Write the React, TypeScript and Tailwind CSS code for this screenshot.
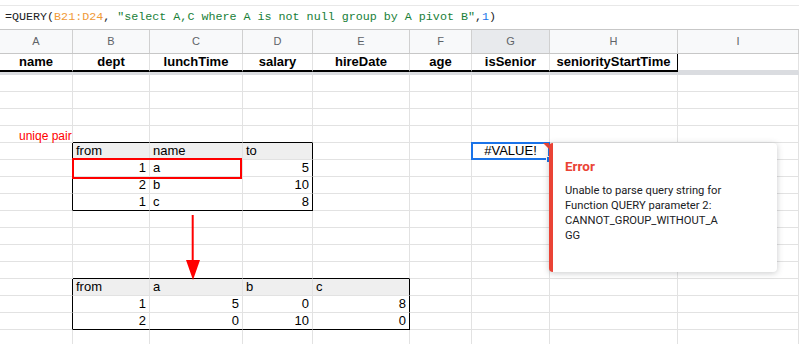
import React from "react";

const COLS = [
  "w-[73px]",
  "w-[77px]",
  "w-[93px]",
  "w-[70px]",
  "w-[97px]",
  "w-[62px]",
  "w-[78px]",
  "w-[128px]",
  "flex-1",
];
const LETTERS = ["A", "B", "C", "D", "E", "F", "G", "H", "I"];
const FIELDS = [
  "name",
  "dept",
  "lunchTime",
  "salary",
  "hireDate",
  "age",
  "isSenior",
  "seniorityStartTime",
  "",
];

type Cell = { t: string; align: "l" | "r" | "c"; head?: boolean };

// body rows start right under the frozen row
const cells: Record<string, Cell> = {
  "4-1": { t: "from", align: "l", head: true },
  "4-2": { t: "name", align: "l", head: true },
  "4-3": { t: "to", align: "l", head: true },
  "5-1": { t: "1", align: "r" },
  "5-2": { t: "a", align: "l" },
  "5-3": { t: "5", align: "r" },
  "6-1": { t: "2", align: "r" },
  "6-2": { t: "b", align: "l" },
  "6-3": { t: "10", align: "r" },
  "7-1": { t: "1", align: "r" },
  "7-2": { t: "c", align: "l" },
  "7-3": { t: "8", align: "r" },
  "12-1": { t: "from", align: "l", head: true },
  "12-2": { t: "a", align: "l", head: true },
  "12-3": { t: "b", align: "l", head: true },
  "12-4": { t: "c", align: "l", head: true },
  "13-1": { t: "1", align: "r" },
  "13-2": { t: "5", align: "r" },
  "13-3": { t: "0", align: "r" },
  "13-4": { t: "8", align: "r" },
  "14-1": { t: "2", align: "r" },
  "14-2": { t: "0", align: "r" },
  "14-3": { t: "10", align: "r" },
  "14-4": { t: "0", align: "r" },
};

const inRange = (v: number, a: number, b: number) => v >= a && v <= b;

function rightBlack(r: number, c: number) {
  if (inRange(r, 4, 7) && (c === 0 || c === 3)) return true;
  if (inRange(r, 12, 14) && (c === 0 || c === 4)) return true;
  return false;
}

function bottomBlack(r: number, c: number) {
  if ((r === 3 || r === 7) && inRange(c, 1, 3)) return true;
  if ((r === 11 || r === 14) && inRange(c, 1, 4)) return true;
  return false;
}

function BodyCell({ r, c }: { r: number; c: number }) {
  const cell = cells[`${r}-${c}`];
  const selected = r === 4 && c === 6;
  return (
    <div
      className={[
        COLS[c],
        "relative h-[17px] shrink-0 border-r border-b box-border px-[3px] text-[13px] leading-[16px] whitespace-nowrap overflow-visible",
        rightBlack(r, c) ? "border-r-black" : "border-r-[#e2e2e2]",
        bottomBlack(r, c) ? "border-b-black" : "border-b-[#e2e2e2]",
        cell?.head ? "bg-[#efefef]" : "",
        cell?.align === "r" ? "text-right" : "",
        cell?.align === "c" ? "text-center" : "",
      ].join(" ")}
    >
      {cell?.t}
      {selected && (
        <>
          <span className="block text-center">#VALUE!</span>
          <span className="absolute -left-[1px] -top-[1px] w-[79px] h-[18px] border-2 border-[#1a73e8]" />
          <span className="absolute right-[0px] top-0 w-0 h-0 border-t-[6px] border-t-[#ea4335] border-l-[6px] border-l-transparent" />
          <span className="absolute -right-[4px] -bottom-[4px] w-[7px] h-[7px] bg-[#1a73e8] border border-white" />
        </>
      )}
    </div>
  );
}

export default function App() {
  const rows = Array.from({ length: 16 }, (_, i) => i);
  return (
    <div className="relative w-[799px] h-[344px] overflow-hidden bg-white text-[#000] font-['Liberation_Sans',Arial,sans-serif]">
      {/* formula bar */}
      <div className="mt-[5px] h-[25px] border-t border-b border-t-[#e8e8e8] border-b-[#c7c7c7] box-border flex items-center pl-[5px] font-['Liberation_Mono',monospace] text-[11.7px] whitespace-pre text-[#202124]">
        <span>=QUERY(</span>
        <span className="text-[#f09a37]">B21:D24</span>
        <span>, </span>
        <span className="text-[#188038]">
          "select A,C where A is not null group by A pivot B"
        </span>
        <span>,</span>
        <span className="text-[#1a73e8]">1</span>
        <span>)</span>
      </div>

      {/* column letters */}
      <div className="flex h-[24px] border-b border-b-[#c7c7c7] box-border">
        {LETTERS.map((l, i) => (
          <div
            key={l}
            className={[
              COLS[i],
              "shrink-0 border-r border-r-[#d0d0d0] box-border flex items-center justify-center text-[11px] text-[#5f6368]",
              i === 6 ? "bg-[#e8eaed]" : "bg-[#f8f9fa]",
            ].join(" ")}
          >
            {l}
          </div>
        ))}
      </div>

      {/* frozen header row */}
      <div className="flex h-[18px]">
        {FIELDS.map((f, i) => (
          <div
            key={i}
            className={[
              COLS[i],
              "shrink-0 border-r border-b-2 box-border text-center font-bold text-[13px] leading-[16px] whitespace-nowrap",
              i === 7 ? "border-r-black" : "border-r-[#e2e2e2]",
              i === 8 ? "border-b-[#dadce0]" : "border-b-black",
            ].join(" ")}
          >
            {f}
          </div>
        ))}
      </div>
      <div className="h-[3px] bg-[#dadce0]" />

      {/* body rows */}
      {rows.map((r) => (
        <div key={r} className="flex">
          {COLS.map((_, c) => (
            <BodyCell key={c} r={r} c={c} />
          ))}
        </div>
      ))}

      {/* drawings laid over the sheet */}
      <span className="absolute left-[19px] top-[129px] text-[12px] leading-[14px] text-[#ff0000]">
        uniqe pair
      </span>
      <span className="absolute left-[72px] top-[158px] w-[170px] h-[21px] border-2 border-[#ff0000]" />
      <svg
        className="absolute left-[184px] top-[214px]"
        width="18"
        height="67"
        viewBox="0 0 18 67"
      >
        <line x1="8.7" y1="1" x2="8.7" y2="48" stroke="#ff0000" strokeWidth="2" />
        <polygon points="2,46 16,46 9,66" fill="#ff0000" />
      </svg>

      {/* error popup */}
      <div className="absolute left-[549px] top-[143px] w-[228px] h-[129px] bg-white rounded-[4px] border-l-4 border-l-[#ea4335] shadow-[0_1px_6px_rgba(60,64,67,0.28)] pl-[12px] pt-[14px] font-['Roboto',sans-serif]">
        <div className="text-[13.5px] leading-[18px] font-bold text-[#ea4335]">
          Error
        </div>
        <div className="mt-[8px] text-[11.2px] leading-[15px] text-[#202124]">
          Unable to parse query string for
          <br />
          Function QUERY parameter 2:
          <br />
          CANNOT_GROUP_WITHOUT_A
          <br />
          GG
        </div>
      </div>
    </div>
  );
}
